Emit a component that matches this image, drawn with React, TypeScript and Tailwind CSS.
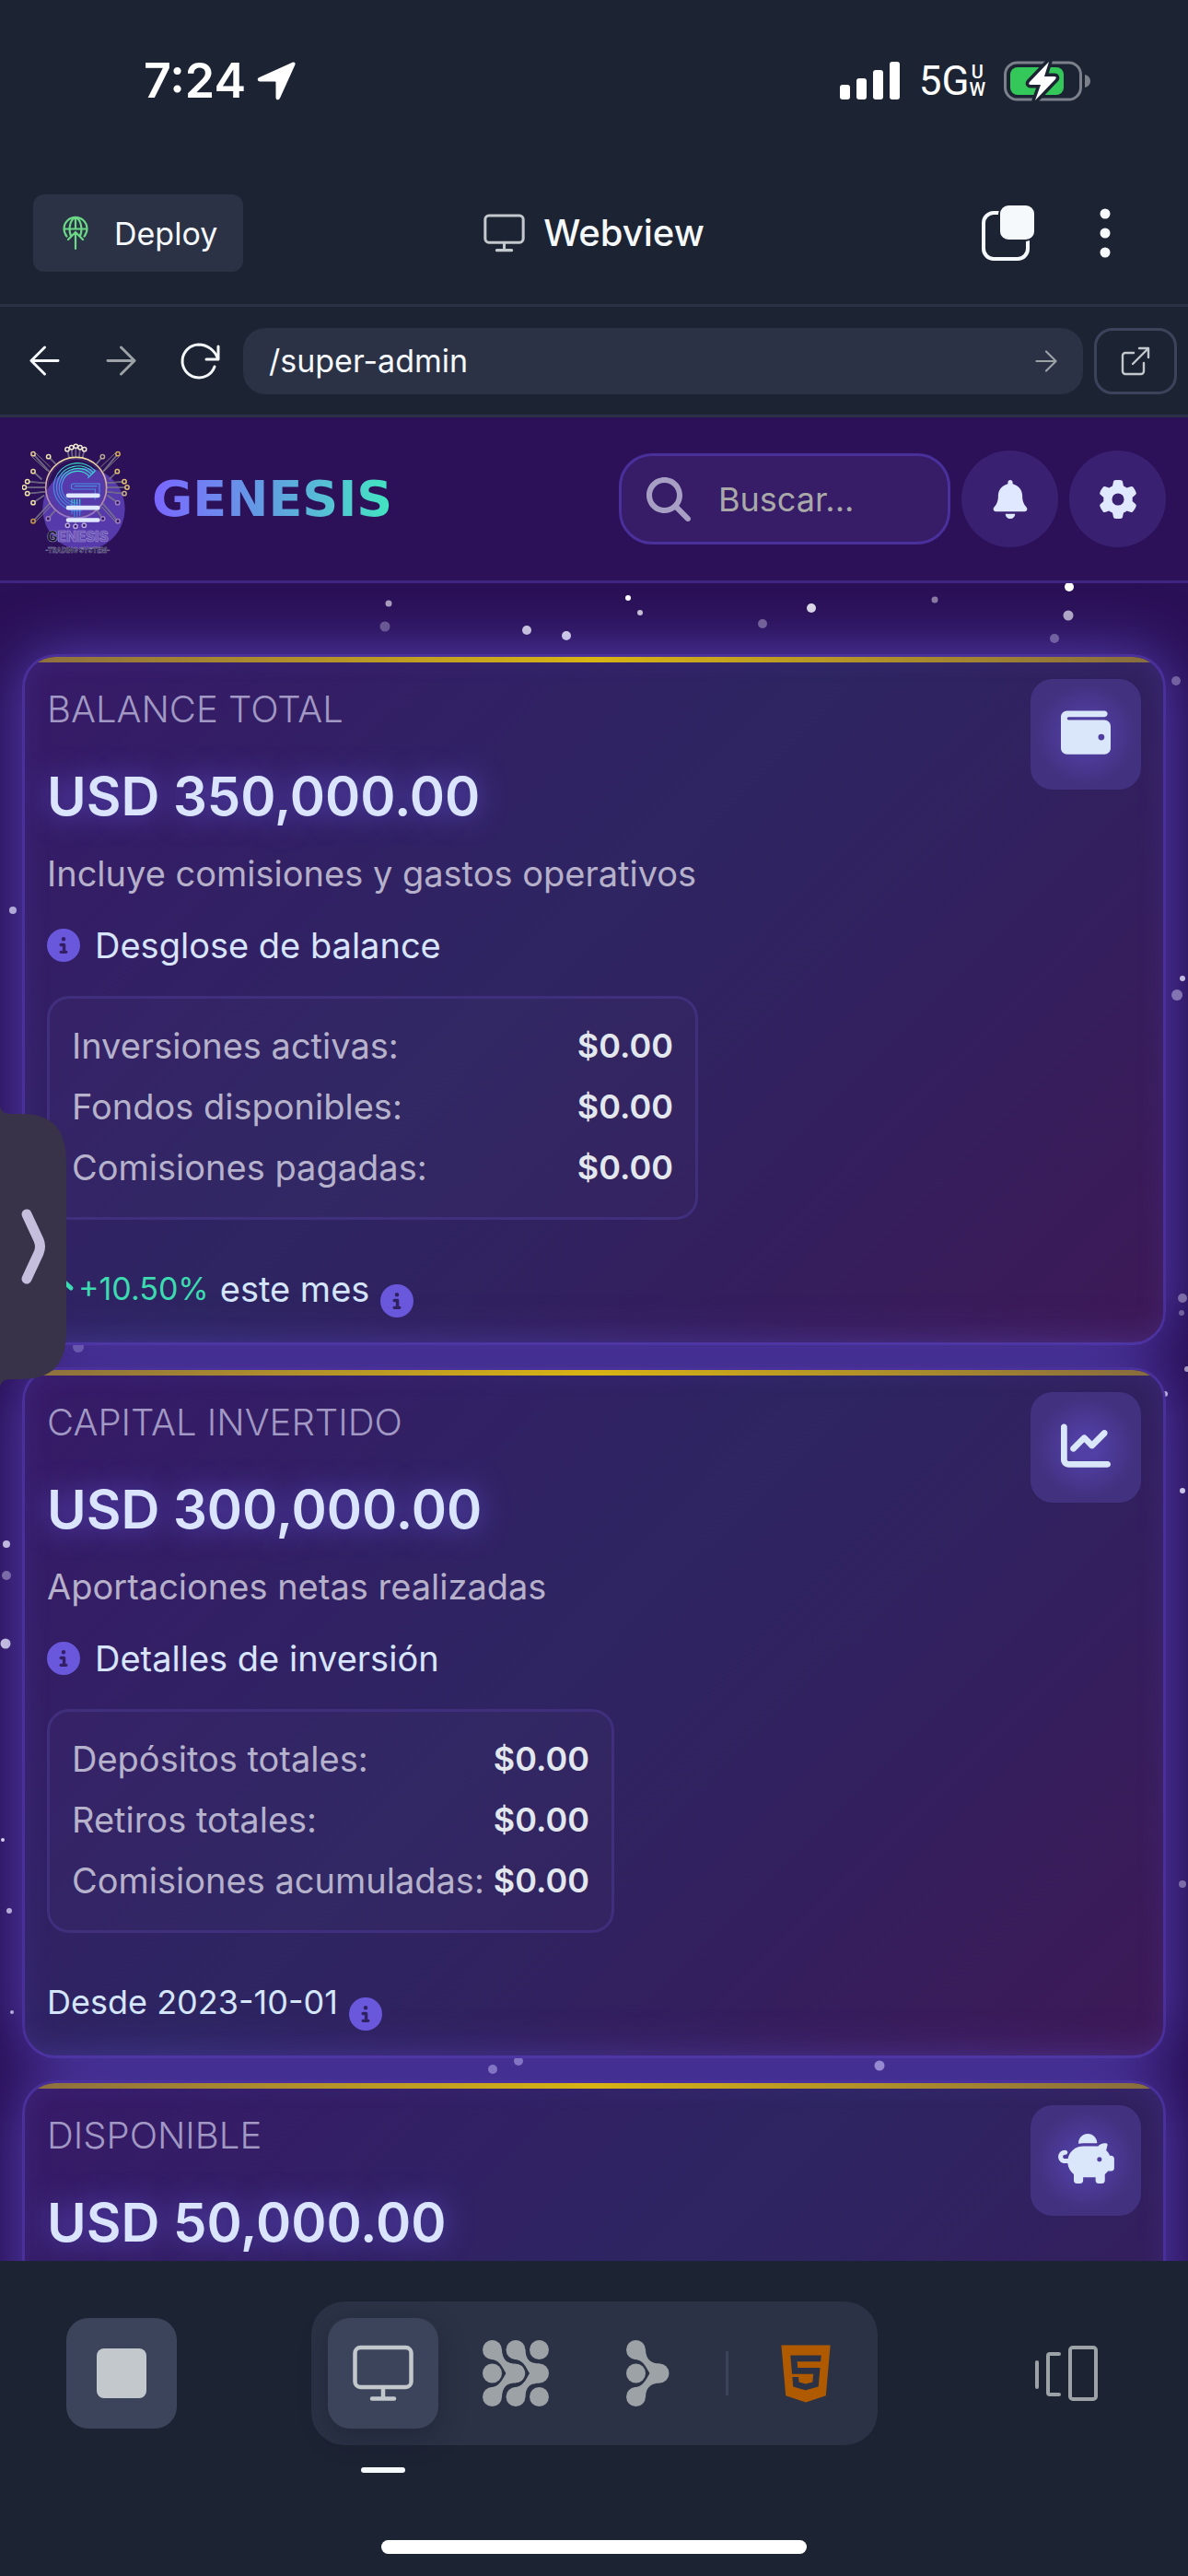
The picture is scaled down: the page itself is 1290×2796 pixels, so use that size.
import type { ReactNode } from "react";
import {
  FaBell,
  FaChartLine,
  FaCircleInfo,
  FaGear,
  FaHtml5,
  FaMagnifyingGlass,
  FaPiggyBank,
  FaWallet,
} from "react-icons/fa6";

/* ---------- Icons ---------- */

function LocationArrow() {
  return (
    <svg viewBox="0 0 42 42" className="h-[42px] w-[42px]" fill="#fff" aria-hidden="true">
      <path d="M38.5 .8C40.800 -.2 42.200 1.400 41.300 3.600L25 39.500C23.800 42.200 20.500 41.700 20.500 38.700V22.500C20.500 21.900 20.100 21.500 19.500 21.500H3.300C.3 21.500 -.2 18.200 2.500 17Z" />
    </svg>
  );
}

function SignalBars() {
  return (
    <svg viewBox="0 0 66 42" className="h-[42px] w-[66px]" fill="#fff" aria-hidden="true">
      <rect x="0" y="25" width="11" height="16" rx="3" />
      <rect x="18" y="18" width="11" height="23" rx="3" />
      <rect x="36" y="9" width="11" height="32" rx="3" />
      <rect x="54" y="0" width="11" height="41" rx="3" />
    </svg>
  );
}

function Battery() {
  return (
    <svg viewBox="0 0 94 46" className="h-[46px] w-[94px]" aria-hidden="true">
      <rect x="1.500" y="3" width="82" height="40" rx="13" fill="none" stroke="#7b808a" strokeWidth="3" />
      <path d="M88 16c4 1 6 4 6 7s-2 6-6 7z" fill="#7b808a" />
      <rect x="7" y="8" width="58" height="30" rx="8" fill="#34c759" />
      <path
        d="M49 2 28 24c-1.500 1.600-.8 3 1 3h11l-6 17 22-23c1.500-1.600.8-3-1-3H44z"
        fill="#fff"
        stroke="#1c2333"
        strokeWidth="7"
        strokeLinejoin="round"
      />
      <path d="M49 2 28 24c-1.500 1.600-.8 3 1 3h11l-6 17 22-23c1.500-1.600.8-3-1-3H44z" fill="#fff" />
    </svg>
  );
}

function DeployIcon() {
  return (
    <svg viewBox="0 0 28 38" className="h-[38px] w-[28px]" fill="none" stroke="#6bd986" strokeWidth="2.200" strokeLinecap="round" aria-hidden="true">
      <path d="M4.500 22.500A12.500 12.500 0 1 1 23.500 22.500" />
      <path d="M9 22C6 15 8 4 14 2c6 2 8 13 5 20M14 2v12M2 14.500h24M14 18v18M6 26l8-8 8 8" />
    </svg>
  );
}

function MonitorIcon({ className, color }: { className: string; color: string }) {
  return (
    <svg viewBox="0 0 66 62" className={className} fill="none" stroke={color} strokeWidth="4.500" strokeLinecap="round" strokeLinejoin="round" aria-hidden="true">
      <rect x="2.500" y="3" width="61" height="43" rx="6" />
      <path d="M33 46v12M21 58.500h24" />
    </svg>
  );
}

function TabsIcon() {
  return (
    <svg viewBox="0 0 60 62" className="h-[62px] w-[60px]" aria-hidden="true">
      <rect x="4" y="9" width="48" height="50" rx="11" fill="none" stroke="#f5f9fc" strokeWidth="4" />
      <rect x="20" y="0" width="40" height="40" rx="10" fill="#1c2333" />
      <rect x="22" y="1" width="37" height="37" rx="9" fill="#f5f9fc" />
    </svg>
  );
}

function KebabIcon() {
  return (
    <svg viewBox="0 0 12 56" className="h-[56px] w-[12px]" fill="#f5f9fc" aria-hidden="true">
      <circle cx="6" cy="7" r="5.500" />
      <circle cx="6" cy="28" r="5.500" />
      <circle cx="6" cy="49" r="5.500" />
    </svg>
  );
}

function ArrowIcon({ className, color, back = false }: { className: string; color: string; back?: boolean }) {
  return (
    <svg viewBox="0 0 34 34" className={className} fill="none" stroke={color} strokeWidth="3" strokeLinecap="round" strokeLinejoin="round" aria-hidden="true">
      {back ? <path d="M32 17H2M17 2 2 17l15 15" /> : <path d="M2 17h30M17 2l15 15-15 15" />}
    </svg>
  );
}

function ReloadIcon() {
  return (
    <svg viewBox="0 0 46 42" className="h-[42px] w-[46px]" fill="none" stroke="#f5f9fc" strokeWidth="3" strokeLinecap="round" strokeLinejoin="round" aria-hidden="true">
      <path d="M43 5v14H30M42.500 18C39 9 31 3 21.500 3a18 18 0 1 0 17.500 24" />
    </svg>
  );
}

function ExternalIcon() {
  return (
    <svg viewBox="0 0 32 32" className="h-8 w-8" fill="none" stroke="#c2c8cc" strokeWidth="2.400" strokeLinecap="round" strokeLinejoin="round" aria-hidden="true">
      <path d="M14 7H5a3 3 0 0 0-3 3v17a3 3 0 0 0 3 3h17a3 3 0 0 0 3-3V18M20 2h10v10M30 2 13 19" />
    </svg>
  );
}

/** Top and bottom discs that flow into a middle disc one column to the right. */
function Chevron({ x }: { x: number }) {
  return (
    <>
      <circle cx={x} cy="10.500" r="10.500" />
      <circle cx={x} cy="61.500" r="10.500" />
      <circle cx={x + 25.5} cy="36" r="10.500" />
      <path
        d={`M${x + 10.5} 10C${x + 10.5} 21 ${x + 17} 25.500 ${x + 26} 25.500V46.500C${x + 17} 46.500 ${x + 10.5} 51 ${x + 10.5} 62L${x} 61.500 ${x - 2} 51.200C${x + 8} 50.500 ${x + 10} 44 ${x + 15} 36C${x + 10} 28 ${x + 8} 21.500 ${x - 2} 20.800L${x} 10.500Z`}
      />
    </>
  );
}

function GridIcon() {
  return (
    <svg viewBox="0 0 72 72" className="h-[72px] w-[72px]" fill="#9da2a6" aria-hidden="true">
      <circle cx="10.500" cy="36" r="10.500" />
      <circle cx="61.500" cy="10.500" r="10.500" />
      <circle cx="61.500" cy="61.500" r="10.500" />
      <Chevron x={36} />
      <Chevron x={10.5} />
      <path
        d="M22.800 9C23 22 27 24 36 24.300 46 25 47 32 47.800 36 47 40 46 47 36 47.700 27 48 23 50 22.800 63M48 9C48.300 19 50.500 22 55 23.200M48 63C48.300 53 50.500 50 55 48.800"
        fill="none"
        stroke="#2b3245"
        strokeWidth="2.500"
      />
    </svg>
  );
}

function BranchIcon() {
  return (
    <svg viewBox="0 0 47 72" className="h-[72px] w-[47px]" fill="#9da2a6" aria-hidden="true">
      <circle cx="10.500" cy="36" r="10.500" />
      <Chevron x={10.5} />
    </svg>
  );
}

function PanelsIcon() {
  return (
    <svg viewBox="0 0 72 62" className="h-[62px] w-[72px]" fill="none" stroke="#9da2a6" strokeWidth="4" strokeLinecap="round" strokeLinejoin="round" aria-hidden="true">
      <path d="M4 19v27M28 10H18a2 2 0 0 0-2 2v40a2 2 0 0 0 2 2h10" />
      <rect x="40" y="3" width="28" height="56" rx="3" />
    </svg>
  );
}

const LOGO_NODES: [number, number, number, number, string][] = [
  [76, 83, 128, 140, "#e8cf95"],
  [352, 83, 304, 140, "#d9ab5c"],
  [76, 302, 130, 244, "#c59a45"],
  [352, 302, 302, 244, "#9b7fc0"],
  [126, 92, 150, 116, "#e9e2b0"],
  [302, 92, 282, 116, "#b8a890"],
  [76, 140, 104, 166, "#e8d99a"],
  [350, 140, 324, 166, "#e0c070"],
  [57, 173, 116, 178, "#efe3a6"],
  [47, 192, 116, 192, "#efe3a6"],
  [57, 212, 116, 206, "#efe3a6"],
  [373, 173, 316, 178, "#e0c070"],
  [382, 192, 316, 192, "#e0c070"],
  [373, 212, 316, 206, "#c8b08a"],
  [76, 242, 112, 218, "#efe3a6"],
  [351, 242, 318, 218, "#9b7fc0"],
  [125, 294, 150, 264, "#9b7fc0"],
  [303, 294, 282, 264, "#9b7fc0"],
  [187, 68, 193, 96, "#f0ead0"],
  [201, 62, 204, 94, "#f0ead0"],
  [215, 58, 215, 94, "#f0ead0"],
  [229, 62, 226, 94, "#f0ead0"],
  [243, 68, 237, 96, "#f0ead0"],
  [188, 316, 194, 288, "#b9a6e0"],
  [214, 319, 214, 290, "#b9a6e0"],
  [242, 316, 236, 288, "#b9a6e0"],
];

const LOGO_TRACES: [number, number, number, number][] = [
  [82, 78, 132, 126],
  [72, 92, 122, 138],
  [346, 78, 296, 126],
  [356, 92, 308, 138],
  [82, 306, 132, 254],
  [346, 306, 298, 254],
];

function GenesisLogo() {
  return (
    <svg viewBox="40 48 351 366" className="h-[122px] w-[117px] shrink-0" role="img" aria-label="Genesis Trading System">
      <defs>
        <linearGradient id="ring" x1="0" y1="0" x2="0" y2="1">
          <stop offset="0" stopColor="#f3dfa0" />
          <stop offset=".55" stopColor="#c99ba6" />
          <stop offset="1" stopColor="#9171c4" />
        </linearGradient>
        <linearGradient id="gee" x1="0" y1="0" x2="0" y2="1">
          <stop offset="0" stopColor="#35e0c8" />
          <stop offset=".35" stopColor="#4a94e8" />
          <stop offset="1" stopColor="#4279d8" />
        </linearGradient>
      </defs>
      <circle cx="241" cy="262" r="134" fill="#563aab" />
      <g fill="none">
        {LOGO_NODES.map(([x, y, x2, y2, color]) => (
          <g key={`${x}-${y}`} stroke={color}>
            <path d={`M${x} ${y}L${x2} ${y2}`} stroke="#8f8f9c" strokeWidth="4.500" />
            <path d={`M${x} ${y}L${x2} ${y2}`} stroke="#3a2a5c" strokeWidth="1.500" />
            <circle cx={x} cy={y} r="6.500" strokeWidth="4.500" fill="#2c1159" />
          </g>
        ))}
        {LOGO_TRACES.map(([a, b, c, d]) => (
          <path key={`${a}-${b}`} d={`M${a} ${b}L${c} ${d}`} stroke="#8f9080" strokeWidth="2.500" />
        ))}
        <circle cx="216" cy="193" r="99" stroke="url(#ring)" strokeWidth="5" />
        <circle cx="216" cy="193" r="93" stroke="#59407f" strokeWidth="2" />
        <g stroke="url(#gee)" strokeWidth="3.500">
          <path d="M278 138A78 78 0 1 0 234 268" />
          <path d="M272 144A69 69 0 1 0 230 260" />
          <path d="M266 149A61 61 0 1 0 228 252" />
          <path d="M259 156A52 52 0 1 0 224 243" />
          <path d="M278 138 254 162M294 180H208q-8 0-8 9t8 9h70v34M292 180v46M284 188h-74" />
          <path d="M210 230v60M219 230v60M228 230v56M202 230v50" />
        </g>
        <path d="M190 218.500h97M190 258.500h97M190 298.500h97" stroke="#e0e8ff" strokeWidth="14" strokeLinecap="round" />
      </g>
      <g fontFamily="Inter, sans-serif" fontWeight="800" textAnchor="middle">
        <text x="221" y="368" fontSize="46" fill="#6a52b4" stroke="#9b8bd2" strokeWidth="2">
          <tspan fill="#17112f" stroke="#8f93a8">G</tspan>ENESIS
        </text>
        <text x="221" y="406" fontSize="21" fill="#1b1636" stroke="#aaa3c9" strokeWidth="1">
          -TRADING SYSTEM-
        </text>
      </g>
    </svg>
  );
}

/* ---------- Star field ---------- */

const STARS: [number, number, number, number][] = [
  [422, 202, 3.5, 0.6],
  [418, 227, 5.5, 0.3],
  [572, 231, 5, 0.8],
  [615, 237, 5, 0.85],
  [682, 196, 3, 1],
  [695, 212, 3, 0.75],
  [828, 224, 5, 0.35],
  [881, 207, 5, 0.85],
  [1015, 198, 3.5, 0.45],
  [1161, 184, 5, 1],
  [1160, 215, 5.5, 0.65],
  [1145, 240, 5, 0.35],
  [1277, 286, 5, 0.35],
  [1284, 609, 3, 0.8],
  [1278, 627, 6, 0.45],
  [14, 535, 4, 0.75],
  [1284, 956, 5, 0.4],
  [1283, 972, 3, 0.35],
  [1289, 1033, 3, 0.6],
  [1265, 1060, 3, 0.8],
  [1284, 1165, 3, 0.85],
  [1284, 1592, 4, 0.4],
  [7, 1223, 4, 0.8],
  [7, 1257, 5, 0.4],
  [6, 1331, 5.5, 0.8],
  [3, 1544, 2, 0.9],
  [10, 1621, 3, 0.75],
  [13, 1731, 2, 0.75],
  [85, 1009, 6, 0.3],
  [535, 1793, 5, 0.5],
  [563, 1784, 5, 0.5],
  [955, 1789, 5.5, 0.65],
];

function Stars() {
  return (
    <svg className="pointer-events-none absolute inset-0 h-full w-full" aria-hidden="true">
      {STARS.map(([cx, cy, r, opacity]) => (
        <circle key={`${cx}-${cy}`} cx={cx} cy={cy} r={r} fill="#fff" opacity={opacity} />
      ))}
    </svg>
  );
}

/* ---------- Cards ---------- */

function InfoDot() {
  return <FaCircleInfo className="h-9 w-9 shrink-0 text-[#6a58dc]" aria-hidden="true" />;
}

type CardProps = {
  title: string;
  amount: string;
  note?: string;
  detail?: string;
  boxWidth?: string;
  rows?: string[];
  icon: ReactNode;
  footer?: ReactNode;
};

function BalanceCard({ title, amount, note, detail, boxWidth = "", rows, icon, footer }: CardProps) {
  return (
    <section className="relative min-h-[750px] overflow-clip rounded-[36px] border-3 border-[#4a309b] bg-[linear-gradient(135deg,#371a68_0%,#2e2562_45%,#32205f_66%,#3e1957_100%)] p-6 shadow-[0_0_66px_rgba(108,92,231,0.65),inset_0_0_30px_rgba(108,92,231,0.15)]">
      <div className="absolute inset-x-0 top-0 h-1.5 bg-[linear-gradient(90deg,#8c6f40,#d8b414,#866b40)]" />
      <div className="flex items-start justify-between">
        <div>
          <h2 className="text-[40px] font-light leading-[66px] text-[#a198c4]">{title}</h2>
          <p className="mt-4 text-[58px] font-semibold leading-[90px] text-[#dae5fd] [text-shadow:0_0_30px_rgba(108,92,231,0.8)]">
            {amount}
          </p>
        </div>
        <div className="grid h-[120px] w-[120px] shrink-0 place-items-center rounded-3xl bg-[radial-gradient(circle,#513fa5_15%,#42317e_65%)] pb-1 text-[54px] text-[#dae6fa]">
          {icon}
        </div>
      </div>
      {note && <p className="mt-3 text-[38px] leading-[54px] text-[#b6b0ca]">{note}</p>}
      {detail && (
        <p className="mt-6 flex items-center gap-4 text-[38px] leading-[54px] text-[#d8e5fc]">
          <InfoDot />
          {detail}
        </p>
      )}
      {rows && (
        <dl className={`mt-7 flex max-w-full flex-col gap-3 rounded-3xl border-3 border-[#3f2f7c] bg-white/[0.015] px-6 pt-6 pb-[27px] ${boxWidth}`}>
          {rows.map((row) => (
            <div key={row} className="flex justify-between whitespace-nowrap leading-[54px]">
              <dt className="text-[38px] text-[#b6b2cc]">{row}</dt>
              <dd className="text-[36px] font-semibold text-[#e2e8ee]">$0.00</dd>
            </div>
          ))}
        </dl>
      )}
      {footer && <div className="mt-12 flex h-[58px] items-start text-[36px] leading-[54px] text-[#d5e6fa]">{footer}</div>}
    </section>
  );
}

/* ---------- Page ---------- */

export default function App() {
  return (
    <div className="flex h-screen flex-col overflow-hidden bg-[#1c2333] font-[Inter,sans-serif] text-[#f5f9fc]">
      <div className="flex h-[176px] shrink-0 items-center justify-between pr-[106px] pl-[156px]">
        <div className="flex items-center gap-3 text-[52px] font-semibold leading-none text-white">
          7:24
          <LocationArrow />
        </div>
        <div className="flex items-center">
          <SignalBars />
          <div className="ml-5 flex items-center font-[Roboto,sans-serif] leading-none text-white">
            <span className="text-[44px]">5G</span>
            <span className="flex flex-col text-center text-[20px] font-medium leading-[19px]">
              <span>U</span>
              <span>W</span>
            </span>
          </div>
          <span className="ml-5">
            <Battery />
          </span>
        </div>
      </div>

      <header className="grid h-[157px] shrink-0 grid-cols-[1fr_auto_1fr] items-center border-b-3 border-[#2b3245] px-9">
        <button className="flex h-[84px] w-fit items-center gap-7 rounded-xl bg-[#2b3245] pr-7 pl-8 text-[34px]">
          <DeployIcon />
          Deploy
        </button>
        <h1 className="flex items-center gap-5 text-[40px] font-medium">
          <MonitorIcon className="h-[42px] w-[45px]" color="#c2c8cc" />
          Webview
        </h1>
        <div className="flex items-center justify-end gap-[70px] pr-12">
          <button aria-label="Tabs">
            <TabsIcon />
          </button>
          <button aria-label="More">
            <KebabIcon />
          </button>
        </div>
      </header>

      <nav className="flex h-[120px] shrink-0 items-center border-b-3 border-[#2b3245] pr-3 pl-8">
        <button aria-label="Back">
          <ArrowIcon className="h-[33px] w-[33px]" color="#f5f9fc" back />
        </button>
        <button aria-label="Forward" className="ml-[50px]">
          <ArrowIcon className="h-[33px] w-[33px]" color="#9da2a6" />
        </button>
        <button aria-label="Reload" className="ml-[46px]">
          <ReloadIcon />
        </button>
        <div className="ml-6 flex h-[72px] min-w-0 flex-1 items-center rounded-3xl bg-[#2b3245] pr-7 pl-7">
          <input aria-label="Path" defaultValue="/super-admin" className="min-w-0 flex-1 bg-transparent text-[34px] outline-none" />
          <button aria-label="Go">
            <ArrowIcon className="h-6 w-6" color="#9da2a6" />
          </button>
        </div>
        <a href="#open" aria-label="Open in new tab" className="ml-3 grid h-[72px] w-[90px] shrink-0 place-items-center rounded-[20px] border-3 border-[#3c445c]">
          <ExternalIcon />
        </a>
      </nav>

      <main className="relative flex min-h-0 flex-1 flex-col overflow-hidden bg-[#2a1056]">
        <Stars />
        <div className="relative z-10 flex h-[180px] shrink-0 items-center border-b-3 border-[#402580] bg-[#2c1159] px-6">
          <a href="#home" className="flex min-w-0 flex-1 items-center gap-6">
            <GenesisLogo />
            <span className="bg-linear-to-r from-[#7a64ff] via-[#5fa0e0] to-[#40e6c0] bg-clip-text font-['DejaVu_Sans',sans-serif] text-[54px] font-bold leading-[60px] text-transparent">
              GENESIS
            </span>
          </a>
          <label className="flex h-[99px] w-[360px] items-center gap-[30px] rounded-[36px] border-3 border-[#4a309b] bg-[#371c67] pl-[27px]">
            <FaMagnifyingGlass className="h-12 w-12 shrink-0 text-[#a89fc4]" aria-hidden="true" />
            <input type="search" aria-label="Buscar" placeholder="Buscar..." className="w-full min-w-0 bg-transparent text-[36px] outline-none placeholder:text-[#a9a9a9]" />
          </label>
          <button aria-label="Notificaciones" className="ml-3 grid h-[105px] w-[105px] place-items-center rounded-full bg-[#3a2070] text-[#e0e8ff]">
            <FaBell className="h-[42px] w-[42px]" />
          </button>
          <button aria-label="Ajustes" className="ml-3 grid h-[105px] w-[105px] place-items-center rounded-full bg-[#3a2070] text-[#e0e8ff]">
            <FaGear className="h-[42px] w-[42px]" />
          </button>
        </div>

        <div className="flex flex-col gap-6 px-6 pt-[77px]">
          <BalanceCard
            title="BALANCE TOTAL"
            amount="USD 350,000.00"
            note="Incluye comisiones y gastos operativos"
            detail="Desglose de balance"
            boxWidth="w-[707px]"
            rows={["Inversiones activas:", "Fondos disponibles:", "Comisiones pagadas:"]}
            icon={<FaWallet />}
            footer={
              <>
                <span className="flex items-center text-[34px] text-[#3ddbb0]">
                  <svg viewBox="0 0 30 30" className="mr-1 h-[30px] w-[30px]" fill="none" stroke="#3ddbb0" strokeWidth="5" strokeLinecap="round" strokeLinejoin="round" aria-hidden="true">
                    <path d="M15 27V4M4 14 15 4l11 10" />
                  </svg>
                  +10.50%
                </span>
                <span className="mx-3 text-[38px]">este mes</span>
                <span className="self-end">
                  <InfoDot />
                </span>
              </>
            }
          />
          <BalanceCard
            title="CAPITAL INVERTIDO"
            amount="USD 300,000.00"
            note="Aportaciones netas realizadas"
            detail="Detalles de inversión"
            boxWidth="w-[616px]"
            rows={["Depósitos totales:", "Retiros totales:", "Comisiones acumuladas:"]}
            icon={<FaChartLine />}
            footer={
              <>
                <span className="mr-3">Desde 2023-10-01</span>
                <span className="self-end">
                  <InfoDot />
                </span>
              </>
            }
          />
          <BalanceCard title="DISPONIBLE" amount="USD 50,000.00" icon={<FaPiggyBank className="h-[54px] w-[61px]" />} />
        </div>

        <button aria-label="Abrir panel" className="absolute top-[45%] left-0 z-20 -translate-y-1/2">
          <svg viewBox="0 0 72 306" className="h-[306px] w-[72px]" aria-hidden="true">
            <path d="M0 0C1 6 4 9 12 9H22C58 9 72 26 72 62V244C72 280 58 297 22 297H12C4 297 1 300 0 306Z" fill="#393349" />
            <path d="M29 118 42 146Q45 153 42 160L29 188" fill="none" stroke="#c6bedd" strokeWidth="11" strokeLinecap="round" />
          </svg>
        </button>
      </main>

      <footer className="flex h-[342px] shrink-0 flex-col items-center pt-11">
        <div className="flex w-full items-center justify-between px-[72px]">
          <button aria-label="Stop" className="grid h-[120px] w-[120px] place-items-center rounded-3xl bg-[#3c445c]">
            <span className="h-[54px] w-[54px] rounded-lg bg-[#c2c8cc]" />
          </button>
          <div className="flex h-[156px] items-center rounded-[36px] bg-[#2b3245] px-[18px]">
            <button aria-label="Webview" className="relative grid h-[120px] w-[120px] place-items-center rounded-3xl bg-[#3c445c] shadow-[0_10px_30px_rgba(14,21,37,0.3)]">
              <MonitorIcon className="h-[62px] w-[66px]" color="#c2c8cc" />
              <span className="absolute top-[162px] left-1/2 h-1.5 w-12 -translate-x-1/2 rounded-sm bg-[#f5f9fc]" />
            </button>
            <button aria-label="Tools" className="ml-6 grid h-[120px] w-[120px] place-items-center">
              <GridIcon />
            </button>
            <button aria-label="Workflows" className="ml-6 grid h-[120px] w-[120px] place-items-center">
              <BranchIcon />
            </button>
            <span className="mx-6 h-12 w-[3px] bg-[#3c445c]" />
            <button aria-label="HTML" className="grid h-[120px] w-[120px] place-items-center">
              <FaHtml5 className="h-[71px] w-[54px] text-[#b05a00]" />
            </button>
          </div>
          <button aria-label="Panels" className="grid h-[120px] w-[120px] place-items-center">
            <PanelsIcon />
          </button>
        </div>
        <div className="mt-[103px] h-[15px] w-[462px] rounded-full bg-white" />
      </footer>
    </div>
  );
}
